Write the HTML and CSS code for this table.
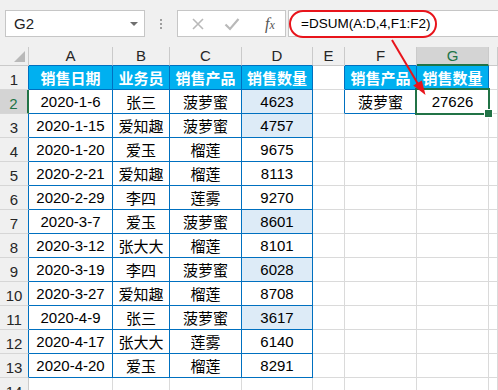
FILE: index.html
```html
<!DOCTYPE html>
<html lang="zh-CN">
<head>
<meta charset="utf-8">
<link rel="stylesheet" href="styles.css">
</head>
<body>
<div class="app">
  <div class="toolbar">
    <div class="namebox"><span>G2</span><i class="dd"></i></div>
    <div class="dots"><i></i><i></i><i></i></div>
    <div class="fxbox">
      <svg class="ic" width="14" height="14" viewBox="0 0 14 14"><path d="M2 2 L12 12 M12 2 L2 12" stroke="#b9b9b9" stroke-width="1.6" fill="none"/></svg>
      <svg class="ic" width="16" height="14" viewBox="0 0 16 14"><path d="M1.5 7.5 L6 12 L14.5 2" stroke="#b9b9b9" stroke-width="2.2" fill="none"/></svg>
      <span class="fx">f<small>x</small></span>
    </div>
    <div class="formula"><span class="ftext">=DSUM(A:D,4,F1:F2)</span></div>
  </div>
  <div class="sheet">
    <div class="ch corner"><i class="tri"></i></div>
    <div class="ch tb">A</div><div class="ch tb">B</div><div class="ch tb">C</div><div class="ch tb">D</div><div class="ch">E</div><div class="ch tb">F</div><div class="ch sel">G</div><div class="ch"></div>

    <div class="rh tl">1</div><div class="c th">销售日期</div><div class="c th">业务员</div><div class="c th">销售产品</div><div class="c th">销售数量</div><div class="c tl"></div><div class="c th">销售产品</div><div class="c th">销售数量</div><div class="c"></div>

    <div class="rh rsel">2</div><div class="c t">2020-1-6</div><div class="c t">张三</div><div class="c t">菠萝蜜</div><div class="c t hl">4623</div><div class="c tl"></div><div class="c t">菠萝蜜</div><div class="c t active">27626</div><div class="c"></div>

    <div class="rh tl">3</div><div class="c t">2020-1-15</div><div class="c t">爱知趣</div><div class="c t">菠萝蜜</div><div class="c t hl">4757</div><div class="c"></div><div class="c"></div><div class="c"></div><div class="c"></div>

    <div class="rh tl">4</div><div class="c t">2020-1-20</div><div class="c t">爱玉</div><div class="c t">榴莲</div><div class="c t">9675</div><div class="c"></div><div class="c"></div><div class="c"></div><div class="c"></div>

    <div class="rh tl">5</div><div class="c t">2020-2-21</div><div class="c t">爱知趣</div><div class="c t">榴莲</div><div class="c t">8113</div><div class="c"></div><div class="c"></div><div class="c"></div><div class="c"></div>

    <div class="rh tl">6</div><div class="c t">2020-2-29</div><div class="c t">李四</div><div class="c t">莲雾</div><div class="c t">9270</div><div class="c"></div><div class="c"></div><div class="c"></div><div class="c"></div>

    <div class="rh tl">7</div><div class="c t">2020-3-7</div><div class="c t">爱玉</div><div class="c t">菠萝蜜</div><div class="c t hl">8601</div><div class="c"></div><div class="c"></div><div class="c"></div><div class="c"></div>

    <div class="rh tl">8</div><div class="c t">2020-3-12</div><div class="c t">张大大</div><div class="c t">榴莲</div><div class="c t">8101</div><div class="c"></div><div class="c"></div><div class="c"></div><div class="c"></div>

    <div class="rh tl">9</div><div class="c t">2020-3-19</div><div class="c t">李四</div><div class="c t">菠萝蜜</div><div class="c t hl">6028</div><div class="c"></div><div class="c"></div><div class="c"></div><div class="c"></div>

    <div class="rh tl">10</div><div class="c t">2020-3-27</div><div class="c t">爱知趣</div><div class="c t">榴莲</div><div class="c t">8708</div><div class="c"></div><div class="c"></div><div class="c"></div><div class="c"></div>

    <div class="rh tl">11</div><div class="c t">2020-4-9</div><div class="c t">张三</div><div class="c t">菠萝蜜</div><div class="c t hl">3617</div><div class="c"></div><div class="c"></div><div class="c"></div><div class="c"></div>

    <div class="rh tl">12</div><div class="c t">2020-4-17</div><div class="c t">张大大</div><div class="c t">莲雾</div><div class="c t">6140</div><div class="c"></div><div class="c"></div><div class="c"></div><div class="c"></div>

    <div class="rh tl">13</div><div class="c t">2020-4-20</div><div class="c t">爱玉</div><div class="c t">榴莲</div><div class="c t">8291</div><div class="c"></div><div class="c"></div><div class="c"></div><div class="c"></div>

    <div class="rh">14</div><div class="c"></div><div class="c"></div><div class="c"></div><div class="c"></div><div class="c"></div><div class="c"></div><div class="c"></div><div class="c"></div>
  </div>
  <svg class="arrow" width="498" height="390" viewBox="0 0 498 390">
    <line x1="392" y1="40" x2="418" y2="84" stroke="#e8141b" stroke-width="2"/>
    <polygon points="425.5,95 413.2,85.5 421.8,80.4" fill="#e8141b"/>
  </svg>
</div>
</body>
</html>
```
FILE: styles.css
```css
* { box-sizing: border-box; }
html, body { margin: 0; padding: 0; }
body {
  width: 498px;
  height: 390px;
  overflow: hidden;
  background: #ffffff;
  font-family: "Liberation Sans", "Noto Sans CJK SC", sans-serif;
}
.app { position: relative; width: 498px; height: 390px; overflow: hidden; }

.toolbar {
  height: 47px;
  background: #f0f0f0;
  display: flex;
  align-items: center;
  padding-left: 5px;
}
.namebox {
  width: 140px;
  height: 27px;
  background: #fff;
  border: 1px solid #c6c6c6;
  display: flex;
  align-items: center;
  justify-content: space-between;
  padding: 0 6px 0 8px;
  font-size: 15px;
  color: #222;
}
.dd {
  width: 0; height: 0;
  border-left: 4px solid transparent;
  border-right: 4px solid transparent;
  border-top: 4px solid #6f6f6f;
}
.dots {
  width: 32px;
  display: flex;
  flex-direction: column;
  align-items: center;
  gap: 2px;
}
.dots i { width: 2px; height: 2px; background: #9e9e9e; display: block; }
.fxbox {
  width: 109px;
  height: 27px;
  background: #fff;
  border: 1px solid #c6c6c6;
  display: flex;
  align-items: center;
  padding-left: 13px;
  gap: 19px;
}
.ic { display: block; }
.fx {
  font-family: "Liberation Serif", serif;
  font-style: italic;
  font-size: 16px;
  color: #555;
  margin-left: 6px;
}
.fx small { font-size: 12px; }
.formula {
  margin-left: 2px;
  flex: 1;
  height: 27px;
  background: #fff;
  border: 1px solid #c6c6c6;
  border-right: none;
  display: flex;
  align-items: center;
}
.ftext {
  height: 28px;
  margin-left: 0;
  border: 2px solid #e8141b;
  border-radius: 14px;
  padding: 0 5px 0 10px;
  display: flex;
  align-items: center;
  font-size: 13.5px;
  color: #000;
}

.sheet {
  display: grid;
  grid-template-columns: 29px 84px 57px 72px 71px 32px 72px 72px 1fr;
  grid-template-rows: 19px repeat(14, 24px);
}
.ch {
  background: #f0f0f0;
  border-right: 1px solid #cacaca;
  border-bottom: 1px solid #cacaca;
  display: flex;
  align-items: flex-end;
  justify-content: center;
  padding-bottom: 1px;
  font-size: 15px;
  color: #262626;
}
.ch.tb { border-bottom-color: #0070c0; }
.ch.sel {
  background: #d4d4d4;
  border-bottom: 2px solid #217346;
  color: #217346;
  padding-bottom: 0;
}
.corner { align-items: flex-end; justify-content: flex-end; padding: 0 3px 3px 0; }
.tri {
  display: block;
  width: 0; height: 0;
  border-left: 11px solid transparent;
  border-bottom: 11px solid #b9b9b9;
}
.rh {
  background: #f0f0f0;
  border-right: 1px solid #cacaca;
  border-bottom: 1px solid #d6d6d6;
  display: flex;
  align-items: flex-end;
  justify-content: center;
  padding-bottom: 1px;
  font-size: 15px;
  color: #262626;
}
.rh.tl { border-right-color: #0070c0; }
.rh.rsel {
  background: #d4d4d4;
  border-right: 2px solid #217346;
  color: #217346;
}
.c {
  border-right: 1px solid #dadada;
  border-bottom: 1px solid #dadada;
  display: flex;
  align-items: center;
  justify-content: center;
  font-size: 15px;
  color: #000;
  white-space: nowrap;
}
.c.tl { border-right-color: #0070c0; }
.c.t { border-right-color: #0070c0; border-bottom-color: #0070c0; }
.c.th {
  background: #00b0f0;
  color: #fff;
  font-weight: bold;
  border-right-color: #0070c0;
  border-bottom-color: #0070c0;
}
.c.hl { background: #ddebf7; }
.c.active { position: relative; }
.c.active::after {
  content: "";
  position: absolute;
  left: -2px; top: -2px; right: -2px; bottom: -2px;
  border: 2px solid #217346;
}
.c.active::before {
  content: "";
  position: absolute;
  right: -5px; bottom: -5px;
  width: 7px; height: 7px;
  background: #217346;
  border: 1px solid #fff;
  z-index: 2;
}
.arrow { position: absolute; left: 0; top: 0; pointer-events: none; }
```
